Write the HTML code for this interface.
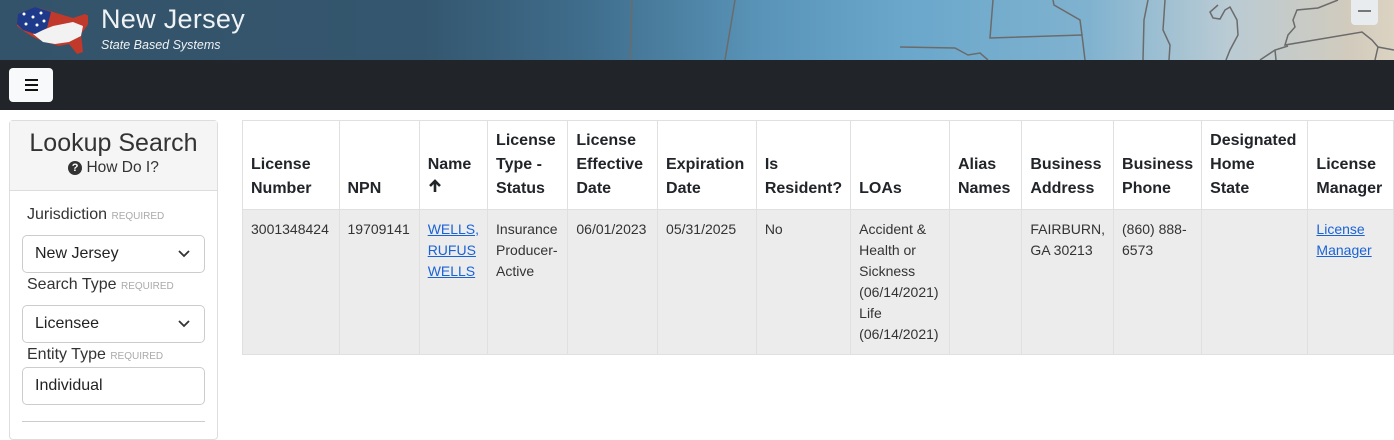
<!DOCTYPE html>
<html><head><style>
*{box-sizing:border-box;margin:0;padding:0}
body{width:1394px;height:427px;overflow:hidden;font-family:"Liberation Sans","DejaVu Sans",sans-serif;background:#fff;color:#212529;position:relative}
.hdr{position:absolute;left:0;top:0;width:1394px;height:60px;background:linear-gradient(90deg,#33536a 0%,#34566e 30%,#3f6d8c 42%,#5a95b9 55%,#6aa7cb 65%,#7fb2cf 78%,#b9cbd4 88%,#d2cbbd 97%,#dcd3c2 100%)}
.nav{position:absolute;left:0;top:60px;width:1394px;height:50px;background:#212529}
.btn{position:absolute;left:9px;top:68px;width:44px;height:34px;background:#f8f9fa;border-radius:4px}
.btn i{position:absolute;left:16px;width:13px;height:2px;background:#111}
.t1{position:absolute;left:101px;top:4px;color:#f0f3f5;font-size:27px;letter-spacing:0.3px}
.t2{position:absolute;left:101px;top:38px;color:#f0f3f5;font-size:12.5px;font-style:italic}
.side{position:absolute;left:9px;top:120px;width:209px;height:320px;border:1px solid #ddd;border-radius:4px}
.sh{height:70px;background:#f5f5f5;border-bottom:1px solid #ddd;text-align:center}
.sh .a{font-size:25px;padding-top:8px;color:#333}
.sh .b{font-size:15.5px;color:#333;margin-top:1px}
.q{display:inline-block;width:14px;height:14px;border-radius:50%;background:#333;color:#fff;font-size:11px;line-height:14px;font-weight:bold;vertical-align:1px}
.lbl{position:absolute;left:27px;font-size:16px;color:#333}
.lbl small{font-size:10px;color:#aaa}
.sel{position:absolute;left:12px;width:183px;height:38px;border:1px solid #ccc;border-radius:5px;font-size:16px;padding:9px 0 0 12px;color:#222}
.sel svg{position:absolute;right:14px;top:14px}
table{position:absolute;left:242px;top:120px;border-collapse:collapse;font-size:14px}
th{border:1px solid #e0e0e0;font-size:16px;text-align:left;vertical-align:bottom;padding:8px 8px 8px 8px;line-height:24px;height:89px;color:#212529}
td{border:1px solid #e0e0e0;background:#ececec;vertical-align:top;padding:9px 8px;line-height:21px;height:142px;color:#333}
a{color:#1a63d6}
</style></head><body>
<div class="hdr">
<svg width="1394" height="60" style="position:absolute;left:0;top:0" fill="none" stroke="#6b6b6b" stroke-width="1.5">
<path d="M900 47 L955 48 L968 55 L980 53 L988 60"/><path d="M993 0 L990 38 L1082 35 L1085 60"/><path d="M1053 0 L1054 5 L1080 20 L1082 35"/><path d="M1148 0 L1144 20 L1143 60"/><path d="M1165 0 L1163 30 L1170 45 L1169 60"/><path d="M1218 5 L1210 12 L1213 18 L1220 19 L1225 10 L1230 7 L1237 20 L1238 35 L1230 50 L1226 60"/><path d="M1338 0 L1318 8 L1297 10 L1293 20 L1295 27 L1288 35 L1285 45 L1362 32 L1372 40 L1378 47 L1394 50"/><path d="M1260 60 L1275 50 L1288 46"/><path d="M1275 50 L1276 60"/><path d="M1378 47 L1375 60"/><path d="M632 0 L630 60"/><path d="M735 0 L725 60"/>
</svg>
<svg width="75" height="56" style="position:absolute;left:13px;top:4px" viewBox="0 0 75 56">
<path d="M5 10 L22 3 L40 8 L60 14 L72 10 L78 13 L74 22 L68 30 L70 48 L64 50 L56 40 L46 42 L32 38 L22 34 L12 28 L4 22 Z" fill="#c0392b"/>
<path d="M20 30 L40 22 L60 18 L70 22 L68 32 L56 38 L42 40 L30 38 Z" fill="#f2f2f2"/>
<path d="M5 10 L22 3 L38 8 L34 24 L22 30 L10 26 L4 20 Z" fill="#1e3a8a"/>
<g fill="#fff"><circle cx="11" cy="10" r="1.5"/><circle cx="20" cy="13" r="1.5"/><circle cx="28" cy="9" r="1.5"/><circle cx="13" cy="20" r="1.5"/><circle cx="24" cy="21" r="1.5"/><circle cx="31" cy="17" r="1.5"/></g>
</svg>
<div class="t1">New Jersey</div>
<div class="t2">State Based Systems</div>
<div style="position:absolute;left:1351px;top:0;width:27px;height:25px;background:#e9ecef;border-radius:0 0 4px 4px"><div style="position:absolute;left:7px;top:10px;width:13px;height:2px;background:#777"></div></div>
</div>
<div class="nav"></div>
<div class="btn"><i style="top:11px"></i><i style="top:16px"></i><i style="top:21px"></i></div>
<div class="side">
<div class="sh"><div class="a">Lookup Search</div><div class="b"><span class="q">?</span> How Do I?</div></div>
</div>
<div class="lbl" style="top:206px">Jurisdiction <small>REQUIRED</small></div>
<div class="sel" style="top:235px;left:22px">New Jersey<svg width="12" height="8"><path d="M1 1 L6 6 L11 1" stroke="#333" stroke-width="1.8" fill="none"/></svg></div>
<div class="lbl" style="top:276px">Search Type <small>REQUIRED</small></div>
<div class="sel" style="top:305px;left:22px">Licensee<svg width="12" height="8"><path d="M1 1 L6 6 L11 1" stroke="#333" stroke-width="1.8" fill="none"/></svg></div>
<div class="lbl" style="top:346px">Entity Type <small>REQUIRED</small></div>
<div class="sel" style="top:367px;left:22px">Individual</div>
<div style="position:absolute;left:22px;top:421px;width:183px;height:1px;background:#ccc"></div>
<table>
<tr>
<th style="width:98px">License Number</th><th style="width:81px">NPN</th><th style="width:62px">Name<br><svg width="14" height="14" viewBox="0 0 14 14"><path d="M7 13 V3 M2 7 L7 2 L12 7" stroke="#212529" stroke-width="2.6" fill="none"/></svg></th><th style="width:82px">License Type - Status</th><th style="width:92px">License Effective Date</th><th style="width:102px">Expiration Date</th><th style="width:93px">Is Resident?</th><th style="width:101px">LOAs</th><th style="width:75px">Alias Names</th><th style="width:82px">Business Address</th><th style="width:84px">Business Phone</th><th style="width:109px">Designated<br>Home<br>State</th><th style="width:88px">License Manager</th>
</tr>
<tr>
<td>3001348424</td><td>19709141</td><td><a href="#">WELLS,<br>RUFUS<br>WELLS</a></td><td>Insurance Producer-Active</td><td>06/01/2023</td><td>05/31/2025</td><td>No</td><td>Accident &amp; Health or Sickness (06/14/2021) Life (06/14/2021)</td><td></td><td>FAIRBURN, GA 30213</td><td>(860) 888-6573</td><td></td><td><a href="#">License Manager</a></td>
</tr>
</table>
</body></html>
